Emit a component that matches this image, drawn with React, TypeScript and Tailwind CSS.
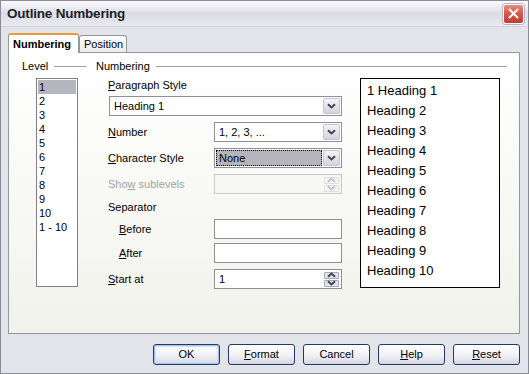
import React from 'react';

const levels = ['1', '2', '3', '4', '5', '6', '7', '8', '9', '10', '1 - 10'];
const headings = Array.from({ length: 10 }, (_, i) => `Heading ${i + 1}`);

function Chevron({ dir = 'down', light = false }: { dir?: 'up' | 'down'; light?: boolean }) {
  return (
    <svg width="9" height="6" viewBox="0 0 9 6">
      <path
        d={dir === 'down' ? 'M1 1.2 L4.5 4.5 L8 1.2' : 'M1 4.8 L4.5 1.5 L8 4.8'}
        fill="none"
        stroke={light ? '#c4c4cc' : '#434356'}
        strokeWidth="2"
      />
    </svg>
  );
}

function ArrowBtn() {
  return (
    <div className="w-[17px] h-[16px] rounded-[2px] border border-[#c3c3d3] bg-gradient-to-b from-[#f2f2f7] to-[#d4d4e0] flex items-center justify-center">
      <Chevron />
    </div>
  );
}

function Combo({ value, focus = false }: { value: string; focus?: boolean }) {
  return (
    <div className="h-[20px] border border-[#8e8f99] bg-white flex items-center p-[1px] gap-[1px]">
      <div
        className={`flex-1 h-full flex items-center pl-[3px] ${
          focus ? 'bg-[#b4b4bc] outline outline-1 outline-dotted outline-black -outline-offset-1' : ''
        }`}
      >
        {value}
      </div>
      <ArrowBtn />
    </div>
  );
}

function Spin({ value = '', disabled = false }: { value?: string; disabled?: boolean }) {
  const box = disabled ? 'border-[#e0e0e6] bg-[#f4f4f6]' : 'border-[#a9a9bb] bg-[#e2e2ec]';
  return (
    <div
      className={`h-[20px] border flex items-center p-[1px] ${
        disabled ? 'border-[#c9c9d0] bg-[#f6f6f3]' : 'border-[#8e8f99] bg-white'
      }`}
    >
      <div className="flex-1 pl-[3px]">{value}</div>
      <div className="flex flex-col gap-[1px] mr-[1px]">
        <div className={`w-[15px] h-[7px] rounded-[1px] border flex items-center justify-center ${box}`}>
          <Chevron dir="up" light={disabled} />
        </div>
        <div className={`w-[15px] h-[7px] rounded-[1px] border flex items-center justify-center ${box}`}>
          <Chevron light={disabled} />
        </div>
      </div>
    </div>
  );
}

function Field() {
  return <div className="h-[20px] border border-[#8e8f99] bg-white" />;
}

function Row({ label, children, indent = false, disabled = false }: { label: React.ReactNode; children: React.ReactNode; indent?: boolean; disabled?: boolean }) {
  return (
    <div className="flex items-center h-[20px]">
      <div className={`w-[106px] ${indent ? 'pl-[11px]' : ''} ${disabled ? 'text-[#a3a3a3]' : ''}`}>{label}</div>
      <div className="w-[128px]">{children}</div>
    </div>
  );
}

function Btn({ children, def = false }: { children: React.ReactNode; def?: boolean }) {
  return (
    <div
      className={`w-[67px] h-[21px] rounded-[3px] border border-[#1f3a6b] flex items-center justify-center bg-gradient-to-b from-white via-[#f3f3f7] to-[#d6d6e2] ${
        def ? 'shadow-[inset_0_0_0_1px_#a9c3ea,inset_0_0_0_2px_#d2e0f5]' : ''
      }`}
    >
      {children}
    </div>
  );
}

const U = ({ c }: { c: string }) => <span className="underline underline-offset-[1px]">{c}</span>;

export default function App() {
  return (
    <div className="w-[529px] h-[374px] bg-[#e3e3ea] border border-[#8b8b98] flex flex-col font-['Liberation_Sans',Arial,sans-serif] text-[11px] leading-[13px] text-black overflow-hidden">
      {/* Title bar */}
      <div className="h-[26px] flex items-center justify-between pl-[6px] pr-[4px] bg-gradient-to-b from-[#fbfbfd] via-[#dcdce6] to-[#e9e9f0] border-b border-[#d4d4dd]">
        <span className="text-[13.5px] font-bold text-[#1e1e2a] tracking-[-0.2px]">Outline Numbering</span>
        <div className="w-[21px] h-[20px] rounded-[3px] border border-white bg-gradient-to-b from-[#e88a7c] via-[#d4574a] to-[#c13c2e] flex items-center justify-center shadow-[0_0_0_1px_#b5b5c4]">
          <svg width="11" height="11" viewBox="0 0 11 11">
            <path d="M1.5 1.5 L9.5 9.5 M9.5 1.5 L1.5 9.5" stroke="white" strokeWidth="2" strokeLinecap="round" />
          </svg>
        </div>
      </div>

      <div className="flex flex-col pl-[7px] pt-[6px]">
        {/* Tabs */}
        <div className="flex items-end h-[19px]">
          <div className="w-[71px] h-[20px] -mb-[1px] relative z-10 rounded-t-[3px] border border-b-0 border-[#919b9c] border-t-[#e99a3c] border-t-[2px] bg-white flex items-center pl-[4px] font-bold">
            Numbering
          </div>
          <div className="w-[48px] h-[17px] rounded-t-[3px] border border-b-0 border-[#919b9c] bg-gradient-to-b from-white to-[#ebebf0] flex items-center pl-[4px]">
            Position
          </div>
        </div>

        {/* Panel */}
        <div className="w-[512px] h-[282px] border border-[#919b9c] bg-gradient-to-b from-white to-[#f2f2ec] flex pl-[13px] pt-[7px]">
          {/* Level */}
          <div className="w-[74px] flex flex-col">
            <div className="flex items-center h-[13px]">
              <span>Level</span>
              <div className="ml-[6px] w-[32px] h-px bg-[#a0a0a8]" />
            </div>
            <div className="ml-[14px] mt-[5px] w-[42px] h-[209px] border border-[#7f7f8c] bg-white p-[1px]">
              {levels.map((l, i) => (
                <div key={l} className={`h-[14px] leading-[15px] pl-[1px] ${i === 0 ? 'bg-[#b5b5bd]' : ''}`}>
                  {l}
                </div>
              ))}
            </div>
          </div>

          {/* Numbering */}
          <div className="w-[411px] flex flex-col">
            <div className="flex items-center h-[13px]">
              <span>Numbering</span>
              <div className="ml-[6px] flex-1 h-px bg-[#a0a0a8]" />
            </div>
            <div className="flex mt-[5px] pl-[12px]">
              <div className="w-[234px] flex flex-col">
                <div className="h-[13px] mt-[1px]">
                  <U c="P" />aragraph Style
                </div>
                <div className="mt-[4px] ml-[1px]">
                  <Combo value="Heading 1" />
                </div>
                <div className="mt-[6px] flex flex-col gap-[6px]">
                  <Row label={<><U c="N" />umber</>}>
                    <Combo value="1, 2, 3, ..." />
                  </Row>
                  <Row label={<><U c="C" />haracter Style</>}>
                    <Combo value="None" focus />
                  </Row>
                  <Row label={<>Sho<U c="w" /> sublevels</>} disabled>
                    <Spin disabled />
                  </Row>
                </div>
                <div className="h-[13px] mt-[7px]">Separator</div>
                <div className="mt-[5px] flex flex-col gap-[4px]">
                  <Row label={<><U c="B" />efore</>} indent>
                    <Field />
                  </Row>
                  <Row label={<><U c="A" />fter</>} indent>
                    <Field />
                  </Row>
                </div>
                <div className="mt-[6px]">
                  <Row label={<><U c="S" />tart at</>}>
                    <Spin value="1" />
                  </Row>
                </div>
              </div>

              {/* Preview */}
              <div className="ml-[18px] w-[140px] h-[210px] border border-black bg-white pt-[2px] pl-[6px] text-[13px]">
                {headings.map((h, i) => (
                  <div key={h} className="h-[20px] leading-[20px]">
                    {i === 0 ? `1 ${h}` : h}
                  </div>
                ))}
              </div>
            </div>
          </div>
        </div>

        {/* Buttons */}
        <div className="flex justify-end gap-[8px] w-[512px] mt-[10px]">
          <Btn def>OK</Btn>
          <Btn><U c="F" />ormat</Btn>
          <Btn>Cancel</Btn>
          <Btn><U c="H" />elp</Btn>
          <Btn><U c="R" />eset</Btn>
        </div>
      </div>
    </div>
  );
}
